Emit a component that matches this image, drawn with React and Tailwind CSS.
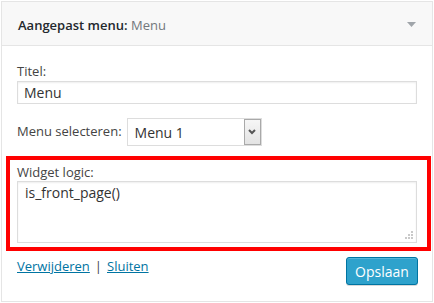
const font = { fontFamily: '"Open Sans", "Noto Sans", sans-serif' };

function ResizeGrip() {
  return (
    <svg className="absolute bottom-[2px] right-[2px]" width="9" height="9" viewBox="0 0 9 9">
      <rect x="6" y="0" width="2" height="2" fill="#c9c9c9" />
      <rect x="3" y="3" width="2" height="2" fill="#c9c9c9" />
      <rect x="6" y="3" width="2" height="2" fill="#c9c9c9" />
      <rect x="0" y="6" width="2" height="2" fill="#c9c9c9" />
      <rect x="3" y="6" width="2" height="2" fill="#c9c9c9" />
      <rect x="6" y="6" width="2" height="2" fill="#c9c9c9" />
    </svg>
  );
}

export default function App() {
  return (
    <div className="h-[303px] w-[434px] bg-white p-px" style={font}>
      <div className="flex h-[301px] w-[432px] flex-col border border-[#e5e5e5] bg-white text-[13px] text-[#444]">
        <div className="flex h-[44px] items-center justify-between border-b border-[#e5e5e5] bg-[#f8f8f8] pl-[16px] pr-[16px]">
          <div className="pt-[3px] leading-none">
            <span className="font-semibold text-[#23282d]">Aangepast menu:</span>{" "}
            <span className="text-[#72777c]">Menu</span>
          </div>
          <svg width="9" height="6" viewBox="0 0 9 6" className="mt-[3px]">
            <path d="M0 0 H9 L4.5 5 Z" fill="#a0a5aa" />
          </svg>
        </div>

        <div className="px-[15px] pt-[16px]">
          <div className="leading-[18px]">Titel:</div>
          <div className="mt-px flex h-[23px] w-[400px] items-center border border-[#dddddd] bg-white pl-[6px] text-[14px] text-[#333] shadow-[inset_0_1px_2px_rgba(0,0,0,0.07)]">
            Menu
          </div>

          <div className="mt-[14px] flex items-center gap-[5px]">
            <span>Menu selecteren:</span>
            <div className="flex h-[28px] w-[135px] items-stretch border border-[#dddddd] bg-white">
              <div className="flex flex-1 items-center pl-[7px] text-[14px] text-[#333]">Menu 1</div>
              <div className="flex w-[17px] items-center justify-center border border-[#a9a9a9] bg-gradient-to-b from-[#f6f6f6] to-[#e3e3e3]">
                <svg width="8" height="6" viewBox="0 0 8 6">
                  <path d="M1 1 L4 4 L7 1" stroke="#555" strokeWidth="2" fill="none" />
                </svg>
              </div>
            </div>
          </div>

          <div className="ml-[-11px] mr-[-14px] mt-[10px] h-[95px] border-4 border-[#ff0000] pl-[7px] pr-[10px] pt-[4px]">
            <div className="leading-[17px]">Widget logic:</div>
            <div className="relative h-[62px] w-[400px] border border-[#dddddd] bg-white pl-[7px] pt-px text-[14px] leading-[20px] text-[#333] shadow-[inset_0_1px_2px_rgba(0,0,0,0.07)]">
              is_front_page()
              <ResizeGrip />
            </div>
          </div>

          <div className="mt-[6px] flex items-start justify-between">
            <div className="leading-[18px]">
              <span className="text-[#0074a2] underline">Verwijderen</span>
              <span className="mx-[5px] text-[#444]">|</span>
              <span className="text-[#0074a2] underline">Sluiten</span>
            </div>
            <button className="mr-[-1px] h-[28px] w-[72px] rounded-[3px] border border-[#0074a2] bg-[#2ea2cc] text-[14px] text-white shadow-[inset_0_1px_0_rgba(120,200,230,0.5),0_1px_0_rgba(0,0,0,0.15)]">
              Opslaan
            </button>
          </div>
        </div>
      </div>
    </div>
  );
}
